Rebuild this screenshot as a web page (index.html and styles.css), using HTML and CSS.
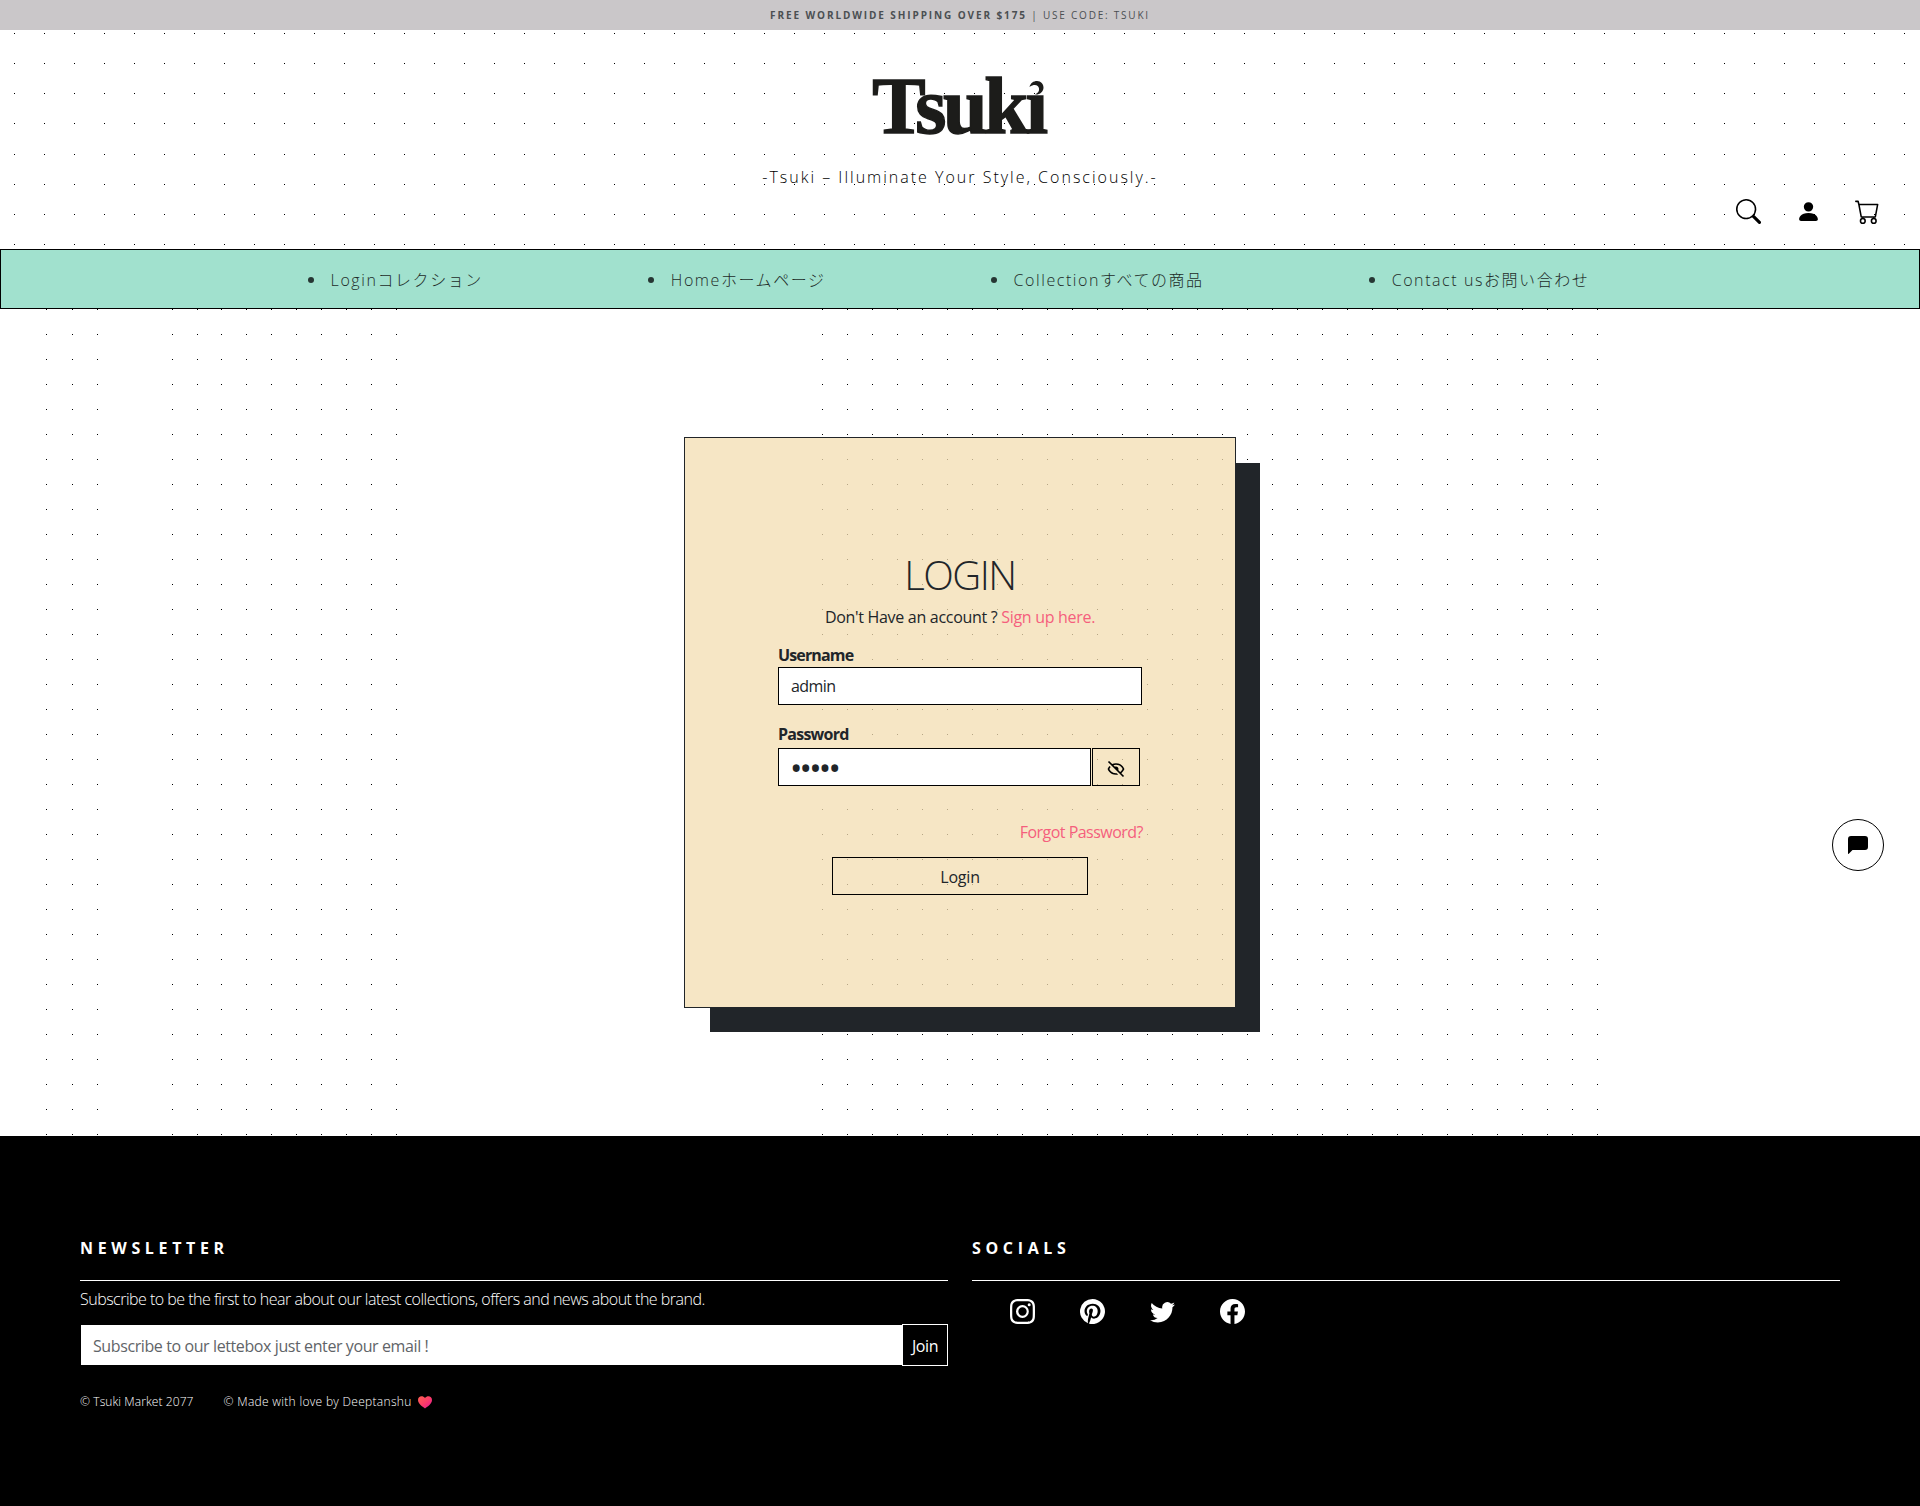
FILE: index.html
```html
<!DOCTYPE html>
<html lang="en">
<head>
<meta charset="utf-8">
<title>Tsuki Market – Login</title>
<link rel="stylesheet" href="styles.css">
</head>
<body>
<div class="promo"><p class="promo-text"><b>FREE WORLDWIDE SHIPPING OVER $175</b> | USE CODE: TSUKI</p></div>
<header class="header">
  <div class="brand">
    <a class="logo" aria-label="Tsuki">Tsukı<svg class="moon" viewBox="0 0 14 14"><path d="M0 6C1 2 4 0 7.500 0C11.500 0 14 3 14 6.500C14 11 10 14 5.500 13.500C8.500 12 10 10 9.500 7.500C9 4 5 2.500 0 6Z"/></svg></a>
  </div>
  <div class="sub">
    <p class="tagline">-Tsuki – Illuminate Your Style, Consciously.-</p>
    <div class="tools">
      <svg class="icon" viewBox="0 0 16 16"><path d="M11.742 10.344a6.500 6.500 0 1 0-1.397 1.398h-.001q.044.060.098.115l3.850 3.850a1 1 0 0 0 1.415-1.414l-3.850-3.850a1 1 0 0 0-.115-.1zM12 6.500a5.500 5.500 0 1 1-11 0 5.500 5.500 0 0 1 11 0"/></svg>
      <svg class="icon" viewBox="0 0 16 16"><path d="M3 14s-1 0-1-1 1-4 6-4 6 3 6 4-1 1-1 1zm5-6a3 3 0 1 0 0-6 3 3 0 0 0 0 6"/></svg>
      <svg class="icon" viewBox="0 0 16 16"><path d="M0 1.500A.5.500 0 0 1 .5 1H2a.5.500 0 0 1 .485.379L2.890 3H14.500a.5.500 0 0 1 .491.592l-1.500 8A.5.500 0 0 1 13 12H4a.5.500 0 0 1-.491-.408L2.010 3.607 1.610 2H.5a.5.500 0 0 1-.5-.5M3.102 4l1.313 7h8.170l1.313-7zM5 12a2 2 0 1 0 0 4 2 2 0 0 0 0-4m7 0a2 2 0 1 0 0 4 2 2 0 0 0 0-4m-7 1a1 1 0 1 1 0 2 1 1 0 0 1 0-2m7 0a1 1 0 1 1 0 2 1 1 0 0 1 0-2"/></svg>
    </div>
  </div>
</header>
<nav class="nav">
  <ul class="menu">
    <li class="menu-item">Loginコレクション</li>
    <li class="menu-item">Homeホームページ</li>
    <li class="menu-item">Collectionすべての商品</li>
    <li class="menu-item">Contact usお問い合わせ</li>
  </ul>
</nav>
<main class="main">
  <form class="card">
    <h1 class="title">LOGIN</h1>
    <p class="signup">Don't Have an account ? <a class="link">Sign up here.</a></p>
    <label class="label" for="user">Username</label>
    <input class="field" id="user" type="text" value="admin">
    <label class="label label-pass" for="pass">Password</label>
    <div class="pass-row">
      <input class="field" id="pass" type="password" value="admin">
      <button class="eye" type="button" aria-label="Show password"><svg class="eye-icon" viewBox="0 0 24 24"><path d="M12 19c.946 0 1.810-.103 2.598-.281l-1.757-1.757c-.273.021-.55.038-.841.038-5.351 0-7.424-3.846-7.926-5a8.642 8.642 0 0 1 1.508-2.297L4.184 8.305c-1.538 1.667-2.121 3.346-2.132 3.379a.994.994 0 0 0 0 .633C2.073 12.383 4.367 19 12 19zm0-14c-1.837 0-3.346.396-4.604.981L3.707 2.293 2.293 3.707l18 18 1.414-1.414-3.319-3.319c2.614-1.951 3.547-4.615 3.561-4.657a.994.994 0 0 0 0-.633C21.927 11.617 19.633 5 12 5zm4.972 10.558-2.280-2.280c.19-.39.308-.819.308-1.278 0-1.641-1.359-3-3-3-.459 0-.888.118-1.277.309L8.915 7.501A9.260 9.260 0 0 1 12 7c5.351 0 7.424 3.846 7.926 5-.302.692-1.166 2.342-2.954 3.558z"/></svg></button>
    </div>
    <a class="link forgot">Forgot Password?</a>
    <button class="submit" type="button">Login</button>
  </form>
</main>
<footer class="footer">
  <section class="col">
    <h2 class="heading">NEWSLETTER</h2>
    <p class="lead">Subscribe to be the first to hear about our latest collections, offers and news about the brand.</p>
    <div class="join-row">
      <input class="email" type="email" placeholder="Subscribe to our lettebox just enter your email !">
      <button class="join" type="button">Join</button>
    </div>
    <div class="legal">
      <span>© Tsuki Market 2077</span>
      <span class="made">© Made with love by Deeptanshu <svg class="heart" viewBox="0 0 14 13"><defs><linearGradient id="h" x1="0" y1="0" x2="1" y2="1"><stop offset="0" stop-color="#ff6050"/><stop offset=".5" stop-color="#fb3d68"/><stop offset="1" stop-color="#e51599"/></linearGradient></defs><path fill="url(#h)" d="M7 2C9-.7 14-.3 14 4C14 8 9 11 7 12.500C5 11 0 8 0 4C0-.3 5-.7 7 2Z"/></svg></span>
    </div>
  </section>
  <section class="col">
    <h2 class="heading">SOCIALS</h2>
    <div class="socials">
      <svg class="icon" viewBox="0 0 16 16"><path d="M8 0C5.829 0 5.556.01 4.703.048 3.850.088 3.269.222 2.760.42a3.900 3.900 0 0 0-1.417.923A3.900 3.900 0 0 0 .42 2.760C.222 3.268.087 3.850.048 4.700.01 5.555 0 5.827 0 8.001c0 2.172.01 2.444.048 3.297.04.852.174 1.433.372 1.942.205.526.478.972.923 1.417.444.445.89.719 1.416.923.51.198 1.090.333 1.942.372C5.555 15.990 5.827 16 8 16s2.444-.01 3.298-.048c.851-.04 1.434-.174 1.943-.372a3.900 3.900 0 0 0 1.416-.923c.445-.445.718-.891.923-1.417.197-.509.332-1.090.372-1.942C15.990 10.445 16 10.173 16 8s-.01-2.445-.048-3.299c-.04-.851-.175-1.433-.372-1.941a3.900 3.900 0 0 0-.923-1.417A3.900 3.900 0 0 0 13.240.42c-.51-.198-1.092-.333-1.943-.372C10.443.01 10.172 0 7.998 0zm-.717 1.442h.718c2.136 0 2.389.007 3.232.046.78.035 1.204.166 1.486.275.373.145.64.319.92.599s.453.546.598.92c.11.281.24.705.275 1.485.039.843.047 1.096.047 3.231s-.008 2.389-.047 3.232c-.035.78-.166 1.203-.275 1.485a2.500 2.500 0 0 1-.599.919c-.28.28-.546.453-.92.598-.28.110-.704.240-1.485.276-.843.038-1.096.047-3.232.047s-2.390-.009-3.233-.047c-.78-.036-1.203-.166-1.485-.276a2.500 2.500 0 0 1-.92-.598 2.500 2.500 0 0 1-.6-.92c-.109-.281-.24-.705-.275-1.485-.038-.843-.046-1.096-.046-3.233s.008-2.388.046-3.231c.036-.78.166-1.204.276-1.486.145-.373.319-.64.599-.92s.546-.453.92-.598c.282-.110.705-.240 1.485-.276.738-.034 1.024-.044 2.515-.045zm4.988 1.328a.96.96 0 1 0 0 1.920.96.96 0 0 0 0-1.920m-4.270 1.122a4.109 4.109 0 1 0 0 8.217 4.109 4.109 0 0 0 0-8.217m0 1.441a2.667 2.667 0 1 1 0 5.334 2.667 2.667 0 0 1 0-5.334"/></svg>
      <svg class="icon" viewBox="0 0 16 16"><path d="M8 0a8 8 0 0 0-2.915 15.452c-.07-.633-.134-1.606.027-2.297.146-.625.938-3.977.938-3.977s-.239-.479-.239-1.187c0-1.113.645-1.943 1.448-1.943.682 0 1.012.512 1.012 1.127 0 .686-.437 1.712-.663 2.663-.188.796.4 1.446 1.185 1.446 1.422 0 2.515-1.500 2.515-3.664 0-1.915-1.377-3.254-3.342-3.254-2.276 0-3.612 1.707-3.612 3.471 0 .688.265 1.425.595 1.826a.24.24 0 0 1 .056.230c-.061.252-.196.796-.222.907-.035.146-.116.177-.268.107-1-.465-1.624-1.926-1.624-3.100 0-2.523 1.834-4.840 5.286-4.840 2.775 0 4.932 1.977 4.932 4.620 0 2.757-1.739 4.976-4.151 4.976-.811 0-1.573-.421-1.834-.919l-.498 1.902c-.181.695-.669 1.566-.995 2.097A8 8 0 1 0 8 0"/></svg>
      <svg class="icon" viewBox="0 0 16 16"><path d="M5.026 15c6.038 0 9.341-5.003 9.341-9.334q.002-.211-.006-.422A6.700 6.700 0 0 0 16 3.542a6.700 6.700 0 0 1-1.889.518 3.300 3.300 0 0 0 1.447-1.817 6.500 6.500 0 0 1-2.087.793A3.286 3.286 0 0 0 7.875 6.030a9.320 9.320 0 0 1-6.767-3.429 3.290 3.290 0 0 0 1.018 4.382A3.300 3.300 0 0 1 .64 6.575v.045a3.290 3.290 0 0 0 2.632 3.218 3.200 3.200 0 0 1-.865.115 3 3 0 0 1-.614-.057 3.280 3.280 0 0 0 3.067 2.277A6.600 6.600 0 0 1 .78 13.580a6 6 0 0 1-.78-.045A9.340 9.340 0 0 0 5.026 15"/></svg>
      <svg class="icon" viewBox="0 0 16 16"><path d="M16 8.049c0-4.446-3.582-8.050-8-8.050C3.580 0-.002 3.603-.002 8.050c0 4.017 2.926 7.347 6.750 7.951v-5.625h-2.030V8.050H6.750V6.275c0-2.017 1.195-3.131 3.022-3.131.876 0 1.791.157 1.791.157v1.980h-1.009c-.993 0-1.303.621-1.303 1.258v1.510h2.218l-.354 2.326H9.250V16c3.824-.604 6.750-3.934 6.750-7.951"/></svg>
    </div>
  </section>
</footer>
<button class="chat" type="button" aria-label="Chat"><svg class="chat-icon" viewBox="0 0 20 18"><path d="M3 0H17Q20 0 20 3V11Q20 14 17 14H4.500L.8 17.700Q0 18.300 0 17V3Q0 0 3 0Z"/></svg></button>
</body>
</html>
```
FILE: styles.css
```css
*, *::before, *::after { box-sizing: border-box; }
body {
  margin: 0;
  background: #fff;
  color: #212529;
  font: 400 16px/24px "Open Sans", "Noto Sans CJK JP", sans-serif;
}
p, h1, h2, ul { margin: 0; padding: 0; }
input, button { font: inherit; color: inherit; border-radius: 0; outline: none; margin: 0; }
svg { display: block; }
.icon { width: 25px; height: 25px; fill: currentColor; }

.promo { height: 30px; background: #cac7c9; display: flex; justify-content: center; align-items: center; }
.promo-text { font-size: 10px; letter-spacing: 1.78px; color: #4b4f52; }
.promo-text b { letter-spacing: 1.9px; }

.brand, .sub {
  background-image: linear-gradient(#fff 29px, transparent 0), linear-gradient(90deg, #000 1px, transparent 0);
  background-size: 30px 30px;
}
.brand { height: 105px; background-position: 0 4px, 14px 0; display: flex; justify-content: center; }
.logo {
  position: relative;
  font: 700 80px/96px "Liberation Serif", serif;
  letter-spacing: -3.2px;
  color: #1c1c1a;
  -webkit-text-stroke: 1.5px #1c1c1a;
  margin: 28px 3px 0 0;
  height: 77px;
}
.moon { position: absolute; right: 1px; top: 23px; width: 15px; height: 14px; fill: #1c1c1a; }
.sub { height: 114px; background-position: 0 20px, 14px 0; display: flex; flex-direction: column; align-items: center; padding-top: 30px; }
.tagline { font-weight: 300; letter-spacing: 2px; color: #000; }
.tools { align-self: flex-end; display: flex; gap: 34.500px; padding: 10px 40px 0 0; color: #000; }

.nav { height: 60px; background: #a1e1ce; border: 1px solid #000; }
.menu { display: flex; justify-content: center; gap: 165px; padding: 18px 23px 0 0; list-style: none; }
.menu-item { display: flex; align-items: center; gap: 17px; font-weight: 300; letter-spacing: 1.57px; color: #1d2b28; white-space: nowrap; }
.menu-item::before { content: ""; width: 6px; height: 6px; border-radius: 50%; background: #263633; }

.main {
  height: 827px;
  padding-top: 128px;
  display: flex;
  justify-content: center;
  align-items: flex-start;
  background:
    linear-gradient(#fff 24px, transparent 0) 0 1px / 25px 25px,
    linear-gradient(#000, #000) 46px 0 / 1px 100% no-repeat,
    repeating-linear-gradient(90deg, #000 0 1px, transparent 1px 25px) 72px 0 / 26px 100% no-repeat,
    repeating-linear-gradient(90deg, #000 0 1px, transparent 1px 25px) 172px 0 / 26px 100% no-repeat,
    repeating-linear-gradient(90deg, #000 0 1px, transparent 1px 25px) 221px 0 / 176px 100% no-repeat,
    repeating-linear-gradient(90deg, #000 0 1px, transparent 1px 25px) 822px 0 / 776px 100% no-repeat;
}
.card {
  width: 552px;
  height: 571px;
  padding: 113px 93px 0;
  border: 1px solid #212529;
  background: rgba(243, 221, 178, .75);
  box-shadow: 25px 25px 0 -1px #212529;
  display: flex;
  flex-direction: column;
}
.title { font-weight: 300; font-size: 40px; line-height: 48px; text-align: center; letter-spacing: -1.5px; }
.signup { margin-top: 6px; text-align: center; letter-spacing: -.3px; }
.link { color: #f55f7d; }
.label { margin-top: 14px; font-weight: 700; letter-spacing: -.85px; }
.label-pass { margin: 17px 0 2px; letter-spacing: -.75px; }
.field { width: 364px; height: 38px; padding: 0 12px; border: 1px solid #000; background: #fff; letter-spacing: -.6px; }
.pass-row { display: flex; gap: 1px; }
.pass-row .field { width: 313px; padding-left: 11px; font-size: 33px; letter-spacing: -2.8px; }
.eye { width: 48px; height: 38px; padding: 4px 0 0; border: 1px solid #000; background: none; display: flex; align-items: center; justify-content: center; color: #000; }
.eye-icon { width: 20px; height: 20px; fill: currentColor; }
.forgot { align-self: flex-end; margin: 34px -1px 13px 0; letter-spacing: -.52px; }
.submit { align-self: center; width: 256px; height: 38px; padding: 2px 0 0; border: 1px solid #000; background: none; letter-spacing: -.2px; }

.footer { height: 370px; padding: 100px 80px 0; background: #000; color: #fff; display: grid; grid-template-columns: 1fr 1fr; align-items: start; gap: 24px; }
.heading { font-size: 16px; line-height: 24px; letter-spacing: 4.65px; height: 45px; border-bottom: 1px solid #fff; }
.lead { margin-top: 6px; font-weight: 300; letter-spacing: -.51px; }
.join-row { display: flex; margin-top: 13px; }
.email { flex: 1; height: 42px; padding: 2px 12px 0; border: 1px solid #000; border-right: 0; background: #fff; letter-spacing: -.4px; }
.email::placeholder { color: #5f6468; opacity: 1; }
.join { width: 46px; height: 42px; padding: 2px 0 0; border: 1px solid #fff; background: #000; letter-spacing: -.4px; }
.legal { display: flex; gap: 30px; margin-top: 24px; font-size: 12px; font-weight: 300; letter-spacing: .08px; }
.made { display: flex; align-items: center; gap: 6px; letter-spacing: .3px; }
.heart { width: 14px; height: 13px; }
.socials { display: flex; gap: 45px; padding: 18px 0 0 38px; }

.chat { position: fixed; left: 1832px; top: 819px; width: 52px; height: 52px; padding: 0; border: 1px solid #000; border-radius: 50%; background: #fff; display: flex; align-items: center; justify-content: center; color: #000; }
.chat-icon { width: 20px; height: 18px; fill: currentColor; }
```
